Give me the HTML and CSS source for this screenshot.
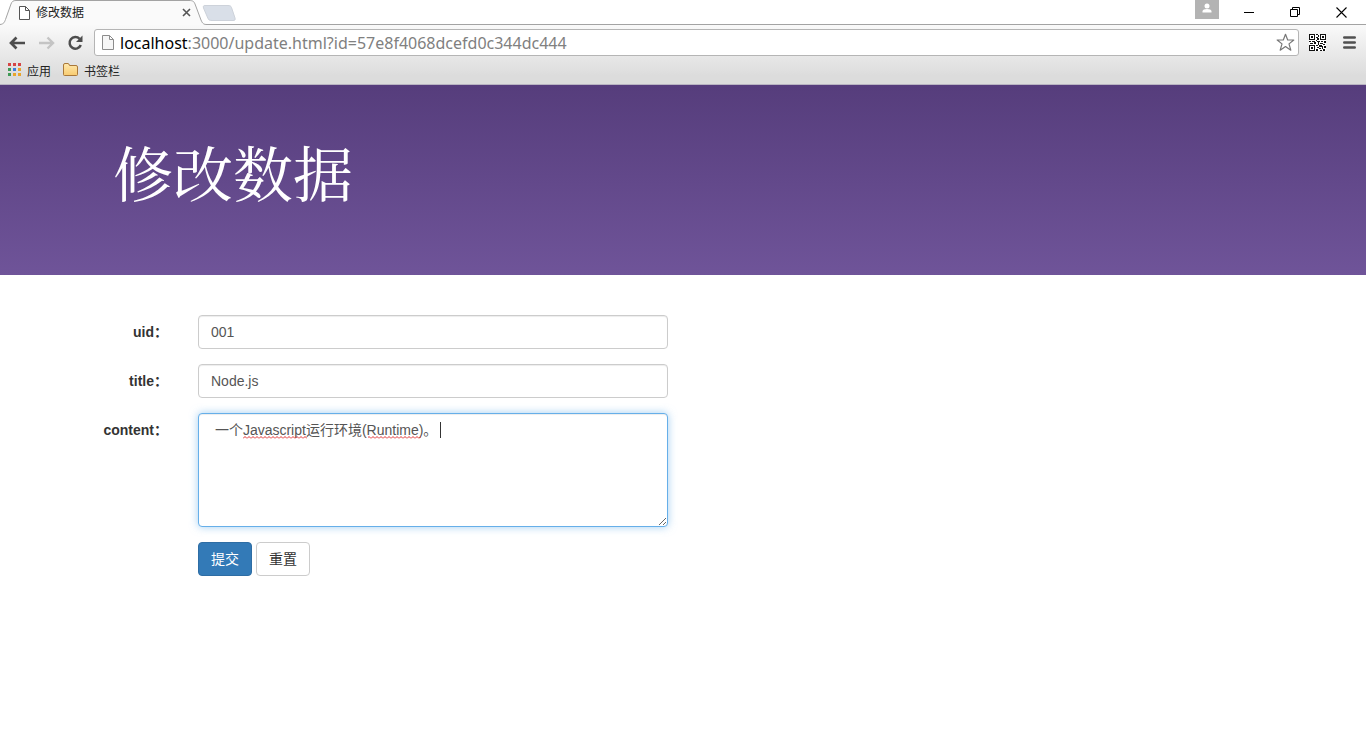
FILE: index.html
```html
<!DOCTYPE html>
<html lang="zh-CN">
<head>
<meta charset="utf-8">
<title>修改数据</title>
<link rel="stylesheet" href="styles.css">
</head>
<body>
<div class="browser">
  <div class="tabstrip">
    <div class="tab">
      <svg class="tab-shape" width="240" height="25" viewBox="0 0 240 25" aria-hidden="true">
        <path d="M0 24.500C4 24 4.500 22 5.500 19.500L11 4C12 1.500 13 .5 16 .5H189C193 .5 194 1.500 195 4L201 20C202.500 23.500 203.500 24.500 207 24.500H240V26H0Z" fill="#fafafa"/>
        <path d="M0 24.500C4 24 4.500 22 5.500 19.500L11 4C12 1.500 13 .5 16 .5H189C193 .5 194 1.500 195 4L201 20C202.500 23.500 203.500 24.500 207 24.500H240" fill="none" stroke="#a3a3a3"/>
        <path d="M205 5.500H228C230 5.500 231 6 231.500 7.500L235 18C235.500 20 235 20.500 233 20.500H212C209.500 20.500 208.500 20 208 18.500L203.500 8C203 6 203.500 5.500 205 5.500Z" fill="#d9dfe8" stroke="#cdd2da"/>
      </svg>
      <svg class="tab-page" width="11" height="14" viewBox="0 0 11 14" aria-hidden="true"><path d="M.5 .5H6.500L10.500 4.500V13.500H.5ZM6.500 .5V4.500H10.500" fill="#fff" stroke="#555"/></svg>
      <span class="tab-title">修改数据</span>
      <button class="plain tab-close" aria-label="关闭标签页"><svg width="9" height="9" viewBox="0 0 9 9"><path d="M1 1L8 8M8 1L1 8" stroke="#555" stroke-width="1.600"/></svg></button>
    </div>
    <div class="window-controls">
      <button class="plain profile" aria-label="用户"><svg width="24" height="19" viewBox="0 0 24 19"><circle cx="12" cy="6" r="2.500" fill="#fff"/><path d="M7.500 12.500V11Q8 9 12 9T16.500 11V12.500Z" fill="#fff"/></svg></button>
      <button class="plain win" aria-label="最小化"><svg width="11" height="11" viewBox="0 0 11 11"><path d="M0 5.500H10" stroke="#000"/></svg></button>
      <button class="plain win" aria-label="还原"><svg width="11" height="11" viewBox="0 0 11 11"><path d="M.5 2.500H7.500V9.500H.5ZM2.500 2.500V.5H9.500V7.500H7.500" fill="none" stroke="#000"/></svg></button>
      <button class="plain win" aria-label="关闭"><svg width="11" height="11" viewBox="0 0 11 11"><path d="M.5 .5L10.500 10.500M10.500 .5L.5 10.500" stroke="#000" stroke-width="1.100"/></svg></button>
    </div>
  </div>
  <div class="toolbar">
    <button class="plain nav" aria-label="后退"><svg width="17" height="14" viewBox="0 0 17 14"><path d="M7.500 1.500L2 7L7.500 12.500M2 7H16" fill="none" stroke="#4d4d4d" stroke-width="2.700"/></svg></button>
    <button class="plain nav" aria-label="前进"><svg width="17" height="14" viewBox="0 0 17 14"><path d="M9.500 1.500L15 7L9.500 12.500M15 7H1" fill="none" stroke="#c4c4c4" stroke-width="2.400"/></svg></button>
    <button class="plain nav" aria-label="重新加载"><svg width="17" height="16" viewBox="0 0 17 16"><path d="M12.600 3.800A5.800 5.800 0 1 0 13.800 10" fill="none" stroke="#4d4d4d" stroke-width="2.500"/><path d="M15.500 .5V7H9Z" fill="#4d4d4d"/></svg></button>
    <div class="omnibox">
      <svg width="12" height="15" viewBox="0 0 12 15" aria-hidden="true"><path d="M.5 .5H7.500L11.500 4.500V14.500H.5ZM7.500 .5V4.500H11.500" fill="#f6f6f6" stroke="#8c8c8c"/></svg>
      <div class="url" role="textbox" aria-label="地址" contenteditable="true" spellcheck="false"><span class="host">localhost</span>:3000/update.html?id=57e8f4068dcefd0c344dc444</div>
      <button class="plain" aria-label="收藏"><svg width="19" height="19" viewBox="0 0 19 19"><path d="M9.500 1.300L11.700 7H17.800L13 10.900L14.800 17.200L9.500 13.600L4.200 17.200L6 10.900L1.200 7H7.300Z" fill="#fff" stroke="#777" stroke-width="1.200" stroke-linejoin="round"/></svg></button>
    </div>
    <button class="plain qr" aria-label="二维码"><svg width="17" height="17" viewBox="0 0 17 17" shape-rendering="crispEdges"><path fill="#fff" d="M0 0H17V17H0Z"/><path d="M.5 .5H5.500V5.500H.5ZM11.500 .5H16.500V5.500H11.500ZM.5 11.500H5.500V16.500H.5Z" fill="none" stroke="#111"/><path fill="#111" d="M2 2h2v2H2zM13 2h2v2h-2zM2 13h2v2H2zM7 0h2v1H7zM9 1h1v2H9zM7 3h2v1H7zM8 4h2v2H8zM7 6h1v1H7zM0 7h2v1H0zM3 7h3v1H3zM1 9h3v1H1zM5 8h2v2H5zM8 7h3v1H8zM12 7h2v1h-2zM15 7h2v2h-2zM9 8h1v3H9zM11 9h3v1h-3zM14 10h2v1h-2zM7 11h2v1H7zM10 11h3v2h-3zM8 13h2v1H8zM7 15h2v2H7zM10 14h2v1h-2zM13 12h1v3h-1zM15 12h2v2h-2zM11 16h2v1h-2zM14 15h2v2h-2z"/></svg></button>
    <button class="plain menu" aria-label="菜单"><svg width="13" height="13" viewBox="0 0 13 13"><path d="M1.300 1.500H11.700M1.300 6.500H11.700M1.300 11.500H11.700" stroke="#505050" stroke-width="2.600" stroke-linecap="round"/></svg></button>
  </div>
  <nav class="bookmarks" aria-label="书签">
    <a class="bookmark" href="#">
      <svg width="13" height="13" viewBox="0 0 13 13" aria-hidden="true"><path fill="#d64545" d="M0 0h3v3H0zM5 0h3v3H5zM10 0h3v3h-3z"/><path fill="#3f9a55" d="M0 5h3v3H0z"/><path fill="#3c7ddd" d="M5 5h3v3H5z"/><path fill="#e8a52c" d="M10 5h3v3h-3zM5 10h3v3H5zM10 10h3v3h-3z"/><path fill="#3f9a55" d="M0 10h3v3H0z"/></svg>
      <span>应用</span></a>
    <a class="bookmark" href="#">
      <svg width="15" height="13" viewBox="0 0 15 13" aria-hidden="true"><defs><linearGradient id="folder" x2="0" y2="1"><stop stop-color="#ffe9ae"/><stop offset="1" stop-color="#f8cb70"/></linearGradient></defs><path d="M.5 11.500V2Q.5 .5 2 .5H5Q6 .5 6.500 2.500H13Q14.500 2.500 14.500 4V11.500Q14.500 12.500 13.500 12.500H1.500Q.5 12.500 .5 11.500Z" fill="url(#folder)" stroke="#a9783a"/></svg>
      <span>书签栏</span></a>
  </nav>
</div>

<header class="masthead">
  <div class="container"><h1>修改数据</h1></div>
</header>

<form class="form container">
  <div class="group">
    <label for="uid">uid：</label>
    <input class="control" id="uid" type="text" value="001">
  </div>
  <div class="group">
    <label for="title">title：</label>
    <input class="control" id="title" type="text" value="Node.js">
  </div>
  <div class="group">
    <label for="content">content：</label>
    <div class="editor">
      <textarea class="control focused" id="content" rows="5" spellcheck="false"> 一个Javascript运行环境(Runtime)。</textarea>
      <svg class="marks" width="240" height="20" viewBox="0 0 240 20" aria-hidden="true">
        <defs><pattern id="wave" width="4" height="3" patternUnits="userSpaceOnUse"><path d="M0 2.500L2 .5L4 2.500" fill="none" stroke="#e03030"/></pattern></defs>
        <rect x="32" y="15" width="64" height="3" fill="url(#wave)"/>
        <rect x="157" y="15" width="53" height="3" fill="url(#wave)"/>
        <path d="M229.500 1V17" stroke="#333"/>
      </svg>
    </div>
  </div>
  <div class="group">
    <div class="actions">
      <button class="btn primary" type="submit">提交</button>
      <button class="btn" type="reset">重置</button>
    </div>
  </div>
</form>
</body>
</html>
```
FILE: styles.css
```css
* { box-sizing: border-box; }
body {
  margin: 0;
  background: #fff;
  color: #333;
  font: 14px/20px "Liberation Sans", "Noto Sans CJK SC", sans-serif;
}
svg { display: block; flex: none; }
.plain {
  display: flex;
  align-items: center;
  justify-content: center;
  padding: 0;
  border: 0;
  background: none;
}

.browser {
  background: linear-gradient(#fafafa 24px, #dcdcdc 76px);
  border-bottom: 1px solid #b9b4c2;
}
.tabstrip {
  display: flex;
  justify-content: space-between;
  height: 25px;
  background: #fff;
  border-bottom: 1px solid #a3a3a3;
}
.tab {
  position: relative;
  display: flex;
  align-items: center;
  width: 240px;
  height: 25px;
  padding-left: 19px;
  font-size: 12px;
}
.tab-shape { position: absolute; left: 0; top: 0; }
.tab-page, .tab-title, .tab-close { position: relative; }
.tab-title { width: 146px; margin-left: 6px; color: #222; }
.window-controls { display: flex; align-items: flex-start; padding-right: 2px; }
.profile { width: 24px; height: 19px; margin-right: 7px; background: #b3b3b3; }
.win { width: 46px; height: 24px; }

.toolbar {
  display: flex;
  align-items: center;
  height: 35px;
  padding: 0 10px 0 9px;
}
.nav { width: 17px; height: 20px; margin-right: 12px; }
.omnibox {
  display: flex;
  align-items: center;
  flex: 1;
  height: 27px;
  margin-left: -2px;
  padding: 0 3px 0 7px;
  background: #fff;
  border: 1px solid #b5b5b5;
  border-radius: 3px;
}
.url {
  flex: 1;
  margin-left: 6px;
  color: #808080;
  font: 16px/22px "Noto Sans", "Open Sans", sans-serif;
  white-space: nowrap;
  outline: 0;
}
.host { color: #000; }
.qr { margin-left: 10px; }
.menu { margin-left: 17px; }

.bookmarks {
  display: flex;
  gap: 12px;
  height: 24px;
  padding: 0 8px;
}
.bookmark {
  display: flex;
  align-items: flex-start;
  gap: 6px;
  padding-top: 3px;
  color: #222;
  font-size: 12px;
  line-height: 16px;
  text-decoration: none;
}
.bookmark span { padding-top: 1px; }

.container { max-width: 1200px; margin: 0 auto; }
.masthead {
  padding: 46px 0 64px;
  background: linear-gradient(#563d7c, #6f5499);
}
h1 {
  margin: 0;
  padding: 0 30px;
  color: #fff;
  font: 400 60px/80px "Noto Serif CJK SC", "Noto Sans CJK SC", serif;
}

.form { padding: 40px 0; }
.group {
  display: grid;
  grid-template-columns: 1fr 5fr 6fr;
  margin-bottom: 15px;
}
.group > label {
  padding: 7px 15px 0;
  font-weight: 700;
  text-align: right;
  white-space: nowrap;
}
.group > .control { margin: 0 15px; }
.control {
  display: block;
  min-width: 0;
  height: 34px;
  padding: 6px 12px;
  color: #555;
  font: inherit;
  background: #fff;
  border: 1px solid #ccc;
  border-radius: 4px;
  box-shadow: inset 0 1px 1px rgba(0, 0, 0, .075);
  outline: 0;
}
.editor { position: relative; margin: 0 15px; }
textarea.control { width: 100%; height: auto; resize: vertical; }
.focused {
  border-color: #66afe9;
  box-shadow: inset 0 1px 1px rgba(0, 0, 0, .075), 0 0 8px rgba(102, 175, 233, .6);
}
.marks { position: absolute; left: 13px; top: 8px; pointer-events: none; }
.actions { grid-column: 2; display: flex; gap: 4px; padding: 0 15px; }
.btn {
  height: 34px;
  padding: 6px 12px;
  color: #333;
  font: inherit;
  background: #fff;
  border: 1px solid #ccc;
  border-radius: 4px;
}
.primary { color: #fff; background: #337ab7; border-color: #2e6da4; }
```
